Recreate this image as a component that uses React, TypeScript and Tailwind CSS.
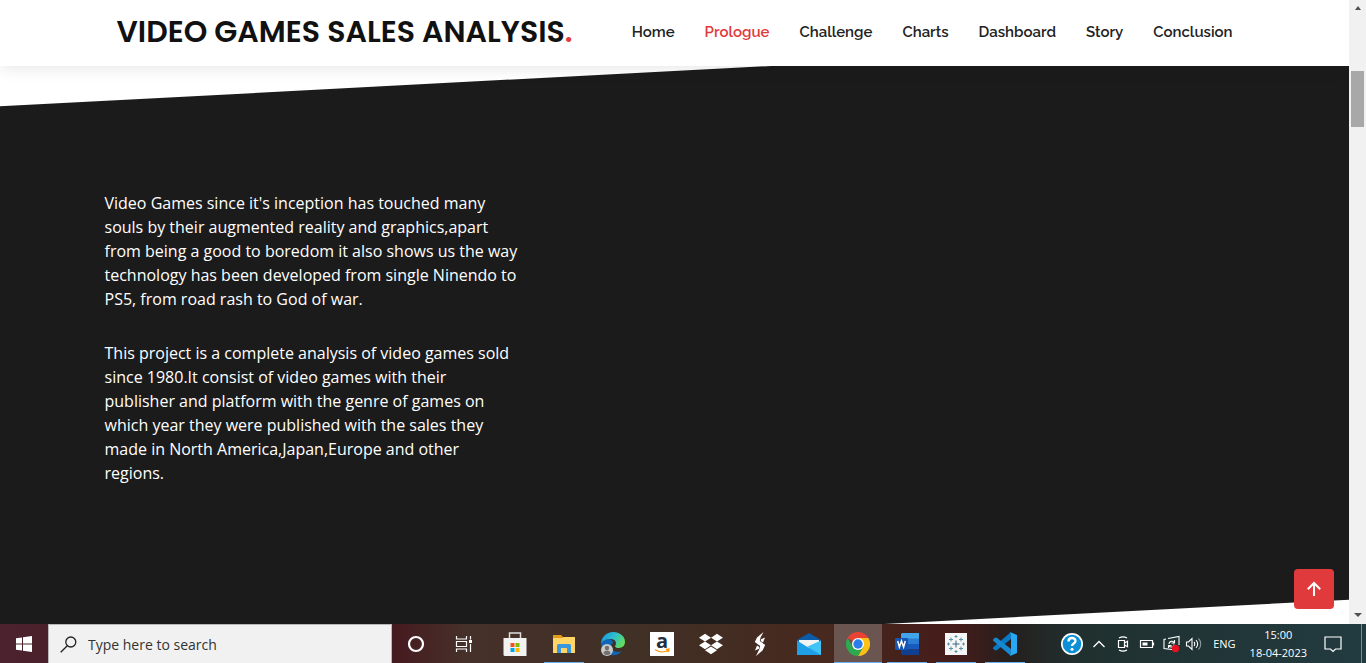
import React from 'react';
import { FaDropbox } from 'react-icons/fa';

const NAV = ['Home', 'Prologue', 'Challenge', 'Charts', 'Dashboard', 'Story', 'Conclusion'];

function Header() {
  return (
    <header className="relative z-10 h-[66px] shrink-0 bg-white shadow-[0_2px_15px_rgba(0,0,0,0.1)]">
      <div className="mx-auto flex h-full max-w-[1140px] items-center justify-between px-3 pb-[2px]">
        <a href="#home" className="whitespace-nowrap font-['Poppins','Inter',sans-serif] text-[30px] leading-9 font-semibold text-[#111]">
          VIDEO GAMES SALES ANALYSIS<span className="text-[#e03a3c]">.</span>
        </a>
        <nav aria-label="Main" className="flex gap-[30px] font-['Raleway','Lato',sans-serif] text-[15px] leading-5 font-semibold text-[#222]">
          {NAV.map((item) => (
            <a key={item} href={`#${item.toLowerCase()}`} className={item === 'Prologue' ? 'text-[#e03a3c]' : ''}>
              {item}
            </a>
          ))}
        </nav>
      </div>
    </header>
  );
}

function Prologue() {
  return (
    <section id="prologue" className="relative flex-1">
      <div className="absolute inset-x-0 top-[5px] -bottom-[11px] -skew-y-3 bg-[#1b1b1b]" />
      <div className="relative mx-auto max-w-[1140px] pt-[125px] font-['Open_Sans',sans-serif] text-[16px] leading-6 text-white">
        <p className="mb-[30px] max-w-[415px]">
          Video Games since it's inception has touched many souls by their augmented reality and graphics,apart from
          being a good to boredom it also shows us the way technology has been developed from single Ninendo to PS5,
          from road rash to God of war.
        </p>
        <p className="max-w-[415px]">
          This project is a complete analysis of video games sold since 1980.It consist of video games with their
          publisher and platform with the genre of games on which year they were published with the sales they made in
          North America,Japan,Europe and other regions.
        </p>
      </div>
      <button
        type="button"
        aria-label="Back to top"
        className="absolute right-[15px] bottom-[15px] flex size-10 items-center justify-center rounded bg-[#e03a3c]"
      >
        <svg viewBox="0 0 24 24" className="size-6" fill="none" stroke="#fff" strokeWidth="2">
          <path d="M12 19V6M5.8 12.2 12 6l6.2 6.2" />
        </svg>
      </button>
    </section>
  );
}

function Scrollbar() {
  return (
    <div className="flex w-[17px] shrink-0 flex-col items-center justify-between bg-[#f1f1f1] pt-[6px] pb-[7px]">
      <svg viewBox="0 0 6 4" className="h-1 w-[6px]" fill="#505050"><path d="M3 0 6 4H0z" /></svg>
      <div className="mt-[61px] mb-auto h-14 w-[13px] bg-[#a8a8a8]" />
      <svg viewBox="0 0 8 4" className="h-1 w-2" fill="#505050"><path d="M0 0h8L4 4z" /></svg>
    </div>
  );
}

const Cortana = () => (
  <svg viewBox="0 0 24 24" className="size-6" fill="none" stroke="#fff" strokeWidth="2.2"><circle cx="12" cy="12" r="7" /></svg>
);
const TaskView = () => (
  <svg viewBox="0 0 24 24" className="size-6" fill="none" stroke="#fff" strokeWidth="1.2">
    <path d="M4.500 4v3h10V4M4.500 20v-3h10v3M4.500 9.500h10v5h-10zM18.500 4v3.500M18.500 12v8" />
    <path d="M17 8h3v3h-3z" fill="#fff" stroke="none" />
  </svg>
);
const Store = () => (
  <svg viewBox="0 0 24 24" className="size-6">
    <path d="M6.500 7V1h11v6" fill="none" stroke="#ddd" strokeWidth="1.5" />
    <path d="M.5 6h23v18H2a1.500 1.500 0 0 1-1.500-1.500z" fill="#f2f2f2" />
    <path d="M7.500 11h4v4h-4z" fill="#f25022" /><path d="M12.500 11h4v4h-4z" fill="#7fba00" />
    <path d="M7.500 16h4v4h-4z" fill="#00a4ef" /><path d="M12.500 16h4v4h-4z" fill="#ffb900" />
  </svg>
);
const Explorer = () => (
  <svg viewBox="0 0 24 24" className="size-6">
    <path d="M1 3h8l2 2h12v5H1z" fill="#e09c18" />
    <path d="M1 6h9l2-1h11v16H1z" fill="#ffd567" />
    <path d="M5 21v-7.500A1.500 1.500 0 0 1 6.500 12h11a1.500 1.500 0 0 1 1.500 1.500V21h-4v-5H9v5z" fill="#3a96dd" />
  </svg>
);
const Edge = () => (
  <svg viewBox="0 0 24 24" className="size-6">
    <defs>
      <linearGradient id="edgeTop" x1="0" x2="1" y1=".3" y2=".7"><stop offset="0" stopColor="#1a9be0" /><stop offset=".5" stopColor="#2fc1c8" /><stop offset="1" stopColor="#6be04f" /></linearGradient>
    </defs>
    <path d="M0 12a12 12 0 0 0 21 7c-4 2-9 1-10.500-2.500-1-2.500 0-5 2-6.500L9 7C4 7 1 9 0 12z" fill="#0d67b8" />
    <path d="M0 12C0 5 5.500 0 12 0c7 0 12 4.500 12 9.800 0 4.200-3 6.200-6 6.200-2.700 0-4-1-4-1.800 0-.6 1-1.200 1-3C15 8.600 12.600 7 9.500 7 4.500 7 1 9 0 12z" fill="url(#edgeTop)" />
    <circle cx="6" cy="18" r="6" fill="#c9c9c9" />
    <circle cx="6" cy="16" r="2.200" fill="#707070" /><path d="M2.500 21.500c0-4 7-4 7 0-2 2-5 2-7 0z" fill="#707070" />
  </svg>
);
const Amazon = () => (
  <span className="relative flex size-6 items-center justify-center bg-white pb-[6px] font-['Open_Sans',sans-serif] text-[20px] leading-[18px] font-bold text-[#232f3e]">
    a
    <svg viewBox="0 0 24 24" className="absolute inset-0 size-6" fill="none" stroke="#f90" strokeWidth="1.300">
      <path d="M5 17.500c4 3 9.500 3 13.500.6M16 17.300l3-.3-.6 2.800" />
    </svg>
  </span>
);
const Stylus = () => (
  <svg viewBox="0 0 24 24" className="size-6" fill="#fff">
    <path d="M15.500 0 9 5.500 6.800 10l5.400 4-1 3.500L8 24l6.500-5.500L17.200 13l-5.400-4 .8-3.500z" />
    <path d="m17 5.500-4 1.800-.3 1.700 2.300 1.500zM7 18.500l4-1.800.3-1.700L9 13.500z" />
  </svg>
);
const Mail = () => (
  <svg viewBox="0 0 24 24" className="size-6">
    <path d="M0 8 12 1l12 7v3H0z" fill="#0a5ca8" /><path d="M2 8h20v5l-10 5L2 13z" fill="#f3f3f3" />
    <path d="M0 8.500 12 16l12-7.500V23H0z" fill="#1f9fe5" /><path d="M24 8.500V23L10 14.800z" fill="#40c4f5" />
  </svg>
);
const Chrome = () => (
  <svg viewBox="0 0 24 24" className="size-6">
    <path d="M12 12 1.600 6A12 12 0 0 1 22.400 6z" fill="#ea4335" />
    <path d="M12 6h10.400A12 12 0 0 1 12 24l5.200-9z" fill="#fbc116" />
    <path d="M6.800 15 1.600 6A12 12 0 0 0 12 24l5.200-9z" fill="#2da94f" />
    <circle cx="12" cy="12" r="6" fill="#fff" /><circle cx="12" cy="12" r="4.700" fill="#2b7de9" />
  </svg>
);
const Word = () => (
  <svg viewBox="0 0 24 24" className="size-6">
    <path d="M7 1h17v6H6V2z" fill="#41a5ee" /><path d="M6 6.500h18V12H6z" fill="#2b7cd3" />
    <path d="M6 12h18v5.500H6z" fill="#185abd" /><path d="M6 17.500h18V23H7l-1-1z" fill="#103f91" />
    <rect y="6" width="13" height="12" rx="1" fill="#1854b0" />
    <path d="m2.700 9 1.700 6L6.500 9l2.100 6 1.700-6" fill="none" stroke="#fff" strokeWidth="1.500" />
  </svg>
);
const Plus = ({ x, y, r }: { x: number; y: number; r: number }) => <path d={`M${x - r} ${y}h${2 * r}M${x} ${y - r}v${2 * r}`} />;
const Tableau = () => (
  <svg viewBox="0 0 24 24" className="size-6" fill="none" stroke="#5d91ad" strokeWidth="1">
    <path d="M1 1h22v22H1z" fill="#f5f5f5" stroke="none" />
    <g stroke="#38647f"><Plus x={12} y={12} r={3.5} /></g>
    <Plus x={7} y={7.5} r={2} /><Plus x={17} y={7.5} r={2} /><Plus x={7} y={16.5} r={2} /><Plus x={17} y={16.5} r={2} />
    <Plus x={12} y={4.5} r={1.5} /><Plus x={12} y={19.5} r={1.5} /><Plus x={4.5} y={12} r={1.5} /><Plus x={19.5} y={12} r={1.5} />
  </svg>
);
const Code = () => (
  <svg viewBox="0 0 24 24" className="size-6">
    <path d="M18 0v7L3.500 18.500 1.500 18 0 16.500v-1z" fill="#0879c4" />
    <path d="M0 8.500v-1L1.500 6l2-.5L18 17v7z" fill="#1688d0" />
    <path d="m17 0 7 3v18l-7 3 1-2V2z" fill="#2aa7f2" />
  </svg>
);

const APPS: { name: string; icon: React.ReactNode; state?: 'open' | 'active' }[] = [
  { name: 'Microsoft Store', icon: <Store /> },
  { name: 'File Explorer', icon: <Explorer />, state: 'open' },
  { name: 'Microsoft Edge', icon: <Edge /> },
  { name: 'Amazon', icon: <Amazon /> },
  { name: 'Dropbox', icon: <FaDropbox className="size-6 text-white" /> },
  { name: 'Stylus', icon: <Stylus /> },
  { name: 'Mail', icon: <Mail /> },
  { name: 'Chrome', icon: <Chrome />, state: 'active' },
  { name: 'Word', icon: <Word />, state: 'open' },
  { name: 'Tableau', icon: <Tableau />, state: 'open' },
  { name: 'Visual Studio Code', icon: <Code />, state: 'open' },
];

function AppButton({ name, icon, state }: (typeof APPS)[number]) {
  return (
    <button
      type="button"
      aria-label={name}
      className={`relative flex w-12 items-center justify-center pt-px ${state === 'active' ? 'bg-[#6a5550]' : ''}`}
    >
      {icon}
      {state && <span className={`absolute bottom-0 h-px bg-[#6cb0ee] ${state === 'active' ? 'inset-x-0' : 'inset-x-1'}`} />}
    </button>
  );
}

function Tray() {
  return (
    <div className="ml-auto flex items-center text-white">
      <button type="button" aria-label="Help" className="mr-2">
        <svg viewBox="0 0 24 24" className="size-6">
          <circle cx="12" cy="12" r="11" fill="#fff" /><circle cx="12" cy="12" r="9.300" fill="#0d8fd8" />
          <path d="M8.500 9.500c0-4.500 7-4.500 7-.5 0 2.500-3.500 2.500-3.500 5" fill="none" stroke="#fff" strokeWidth="2.400" /><circle cx="12" cy="17.300" r="1.500" fill="#fff" />
        </svg>
      </button>
      <button type="button" aria-label="Show hidden icons" className="mr-2">
        <svg viewBox="0 0 14 14" className="size-[14px]" fill="none" stroke="#fff" strokeWidth="1.300"><path d="m1.500 10 5.500-5.500 5.500 5.500" /></svg>
      </button>
      <svg viewBox="0 0 18 18" className="mr-[6px] size-[18px]" fill="none" stroke="#fff" strokeWidth="1.200">
        <path d="M4.500 5.500h6v7h-6zM10.500 8l3-1.700v5.400l-3-1.700M5 3c2.500-1.500 5.500-1.500 8 0M5 15c2.500 1.500 5.500 1.500 8 0" />
      </svg>
      <svg viewBox="0 0 18 18" className="mr-[6px] size-[18px]" fill="none" stroke="#fff" strokeWidth="1.200">
        <path d="M2.500 5.500h12v7h-12zM15.500 7.500v3" /><path d="M4.500 7.500h5v3h-5z" fill="#fff" stroke="none" />
      </svg>
      <svg viewBox="0 0 18 18" className="mr-[5px] size-[18px]" fill="none" stroke="#fff" strokeWidth="1.100">
        <path d="M10 14.500 2 13.500v-9L4 4M6 3.500l11-2V10M7 9c0-3 4-3.500 5-1.500M12.500 5v3h-3M12 9.500c0 3-4 3-5 1.500M6.500 13v-2.500h3" />
        <circle cx="13.500" cy="13.500" r="3.700" fill="#e81123" stroke="none" />
      </svg>
      <svg viewBox="0 0 18 18" className="mr-[10px] size-[18px]" fill="none" stroke="#fff" strokeWidth="1.100">
        <path d="M1.500 7h2L7 3.500v11L3.500 11h-2zM9 7c1 1 1 3 0 4M11 5.200c2.200 2 2.200 5.600 0 7.600" /><path d="M13.500 3.500c3 3 3 8 0 11" stroke="#8b999b" />
      </svg>
      <button type="button" className="mr-[14px] font-['Segoe_UI','Open_Sans',sans-serif] text-[11px] leading-[18px]">ENG</button>
      <div className="mr-[17px] text-center font-['Segoe_UI','Open_Sans',sans-serif] text-[11px] leading-[18px] whitespace-nowrap">
        <div>15:00</div><div>18-04-2023</div>
      </div>
      <button type="button" aria-label="Notifications">
        <svg viewBox="0 0 18 18" className="size-[18px]" fill="none" stroke="#fff" strokeWidth="1.200"><path d="M1 2h16v12h-5.500L9 16.500 6.500 14H1z" /></svg>
      </button>
      <div className="ml-[19px] h-[39px] w-[5px] border-l border-[#7d898b]" />
    </div>
  );
}

function Taskbar() {
  return (
    <footer className="flex h-[39px] shrink-0 bg-[linear-gradient(90deg,#4b222d_0%,#461b20_29%,#46302a_34%,#403026_46%,#47291f_60%,#451c1a_70%,#25201e_74%,#20302f_79%,#223b40_100%)]">
      <button type="button" aria-label="Start" className="flex w-12 items-center justify-center">
        <svg viewBox="0 0 16 16" className="size-4" fill="#fff"><path d="M0 2.200 6 1.400v6H0zM7 1.200 16 0v7.400H7zM0 8.400h6v6.100l-6-.8zM7 8.400h9V16l-9-1.300z" /></svg>
      </button>
      <label className="flex w-[344px] items-center gap-[11px] border border-b-0 border-[#b8b8b8] bg-[#f1f1f1] px-[11px] pt-px">
        <svg viewBox="0 0 17 17" className="size-[17px] shrink-0" fill="none" stroke="#222" strokeWidth="1.300"><circle cx="10.800" cy="6" r="5" /><path d="M7.300 9.700.7 16.300" /></svg>
        <input
          type="text"
          aria-label="Search"
          placeholder="Type here to search"
          className="min-w-0 flex-1 bg-transparent font-['Segoe_UI','Open_Sans',sans-serif] text-[14px] leading-5 text-[#333] outline-none placeholder:text-[#333] placeholder:opacity-100"
        />
      </label>
      <button type="button" aria-label="Cortana" className="flex w-12 items-center justify-center"><Cortana /></button>
      <button type="button" aria-label="Task View" className="flex w-12 items-center justify-center"><TaskView /></button>
      <div className="ml-[3px] flex gap-px">
        {APPS.map((app) => <AppButton key={app.name} {...app} />)}
      </div>
      <Tray />
    </footer>
  );
}

export default function App() {
  return (
    <div className="flex h-screen flex-col overflow-hidden bg-white">
      <div className="flex min-h-0 flex-1">
        <main className="flex min-w-0 flex-1 flex-col overflow-hidden">
          <Header />
          <Prologue />
        </main>
        <Scrollbar />
      </div>
      <Taskbar />
    </div>
  );
}
